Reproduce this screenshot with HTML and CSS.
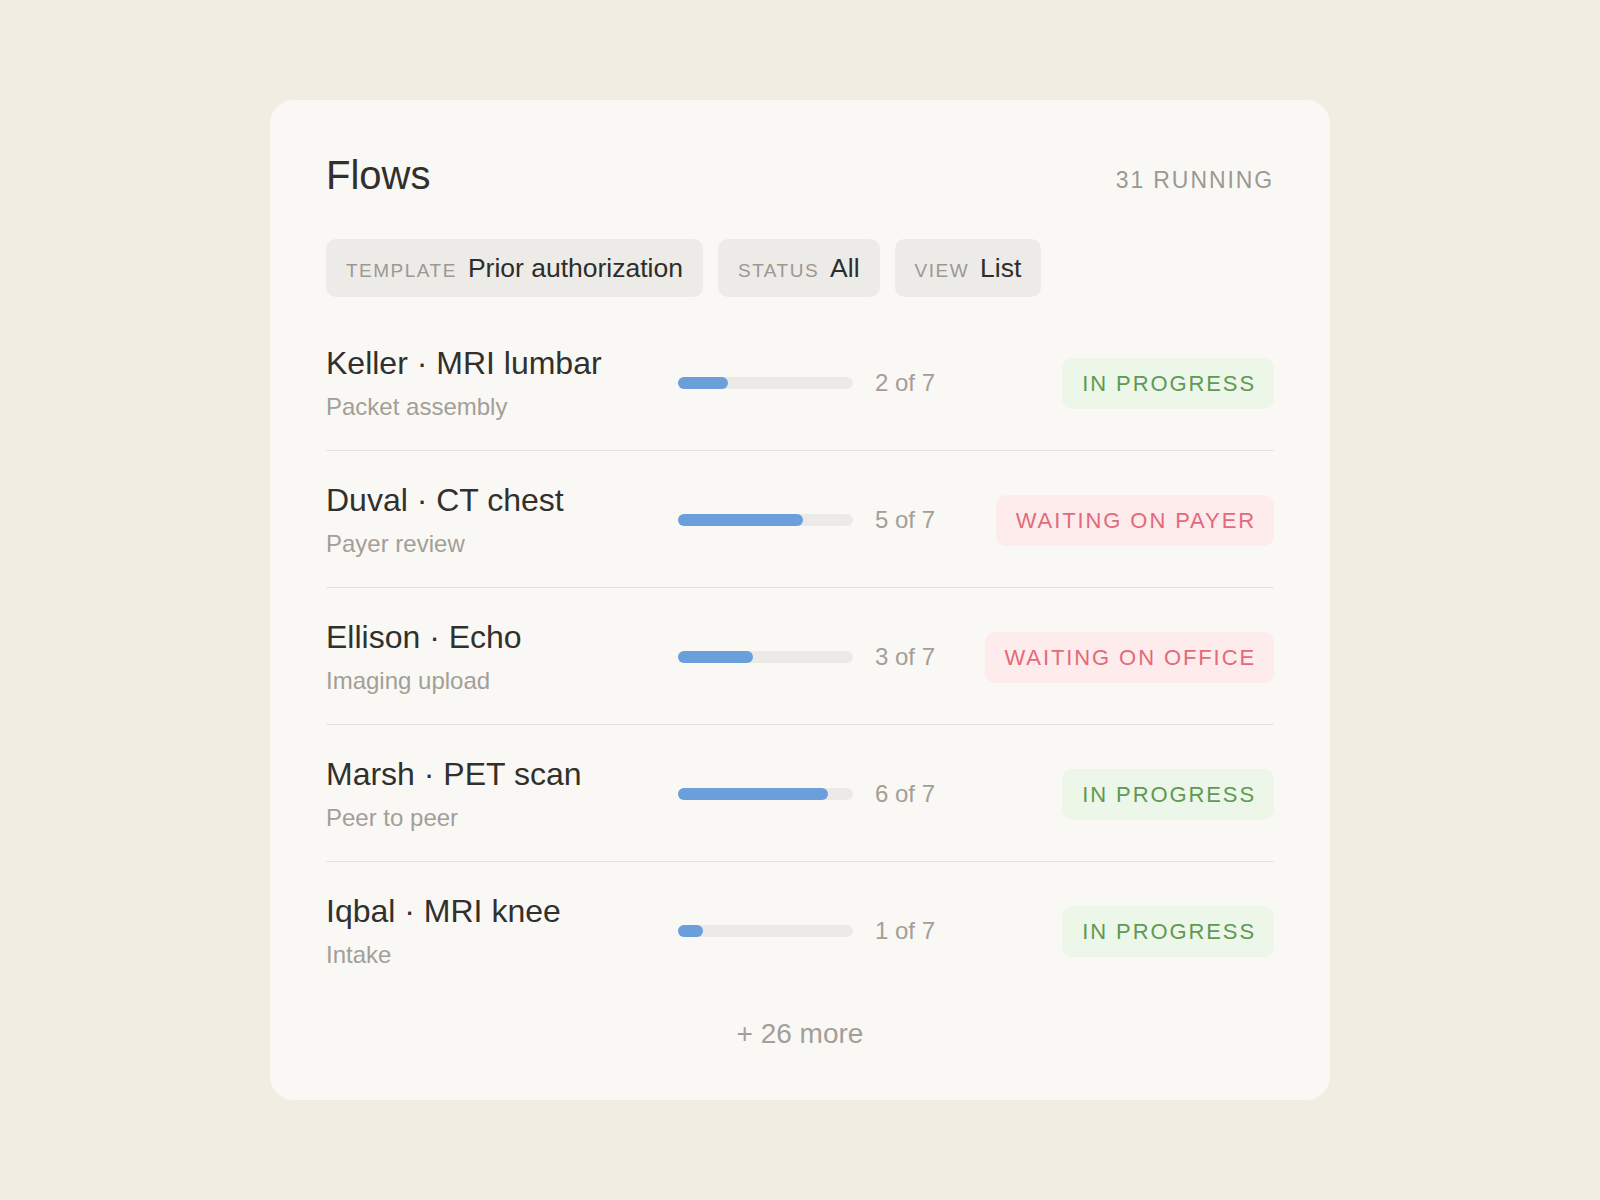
FILE: index.html
```html
<!DOCTYPE html>
<html lang="en">
<head>
<meta charset="UTF-8">
<meta name="viewport" content="width=device-width, initial-scale=1.0">
<title>Flows</title>
<link rel="stylesheet" href="styles.css">
</head>
<body>
<div class="card">
    <div class="header">
        <h1>Flows</h1>
        <span class="count">31 RUNNING</span>
    </div>
    <div class="filters">
        <div class="chip"><span class="chip-label">TEMPLATE</span><span class="chip-value">Prior authorization</span></div>
        <div class="chip"><span class="chip-label">STATUS</span><span class="chip-value">All</span></div>
        <div class="chip"><span class="chip-label">VIEW</span><span class="chip-value">List</span></div>
    </div>
    <div class="list">
        <div class="row">
            <div class="info">
                <div class="name">Keller · MRI lumbar</div>
                <div class="step">Packet assembly</div>
            </div>
            <div class="bar"><div class="fill" style="width: 28.57%"></div></div>
            <div class="progress">2 of 7</div>
            <div class="badge green">IN PROGRESS</div>
        </div>
        <div class="row">
            <div class="info">
                <div class="name">Duval · CT chest</div>
                <div class="step">Payer review</div>
            </div>
            <div class="bar"><div class="fill" style="width: 71.43%"></div></div>
            <div class="progress">5 of 7</div>
            <div class="badge red">WAITING ON PAYER</div>
        </div>
        <div class="row">
            <div class="info">
                <div class="name">Ellison · Echo</div>
                <div class="step">Imaging upload</div>
            </div>
            <div class="bar"><div class="fill" style="width: 42.86%"></div></div>
            <div class="progress">3 of 7</div>
            <div class="badge red">WAITING ON OFFICE</div>
        </div>
        <div class="row">
            <div class="info">
                <div class="name">Marsh · PET scan</div>
                <div class="step">Peer to peer</div>
            </div>
            <div class="bar"><div class="fill" style="width: 85.71%"></div></div>
            <div class="progress">6 of 7</div>
            <div class="badge green">IN PROGRESS</div>
        </div>
        <div class="row">
            <div class="info">
                <div class="name">Iqbal · MRI knee</div>
                <div class="step">Intake</div>
            </div>
            <div class="bar"><div class="fill" style="width: 14.29%"></div></div>
            <div class="progress">1 of 7</div>
            <div class="badge green">IN PROGRESS</div>
        </div>
    </div>
    <div class="more">+ 26 more</div>
</div>
</body>
</html>
```

FILE: styles.css
```css
body {
    font-family: "Liberation Sans", Arial, sans-serif;
    margin: 0;
    background-color: #f2ede2;
    color: #31302c;
}
.card {
    width: 1060px;
    box-sizing: border-box;
    margin: 100px auto 0;
    padding: 51px 56px 48px;
    background-color: #f9f8f4;
    border-radius: 24px;
}
.header {
    display: flex;
    justify-content: space-between;
    align-items: center;
}
h1 {
    margin: 0;
    font-size: 40px;
    line-height: 48px;
    font-weight: normal;
}
.count {
    margin-top: 10px;
    font-size: 23px;
    line-height: 28px;
    letter-spacing: 1.9px;
    color: #9b9893;
}
.filters {
    display: flex;
    gap: 15px;
    margin-top: 40px;
}
.chip {
    display: flex;
    align-items: baseline;
    padding: 13px 20px;
    background-color: #ecebe7;
    border-radius: 10px;
}
.chip-label {
    margin-right: 11px;
    font-size: 19px;
    letter-spacing: 1.5px;
    color: #9b9893;
}
.chip-value {
    font-size: 26.5px;
    line-height: 32px;
    color: #2e2d2a;
}
.list {
    margin-top: 17px;
}
.row {
    display: grid;
    grid-template-columns: 352px 175px 1fr auto;
    align-items: center;
    padding: 29px 0 27px;
    border-bottom: 1px solid #e5e3de;
}
.row:last-child {
    border-bottom: 0;
}
.name {
    font-size: 32px;
    line-height: 40px;
}
.step {
    margin-top: 8px;
    font-size: 24px;
    line-height: 32px;
    color: #a29f99;
}
.bar {
    height: 12px;
    border-radius: 6px;
    background-color: #ebeae6;
}
.fill {
    height: 100%;
    border-radius: 6px;
    background-color: #6b9fdc;
}
.progress {
    padding-left: 22px;
    font-size: 24px;
    color: #a29f99;
}
.badge {
    padding: 13px 18px 13px 20px;
    font-size: 22px;
    line-height: 25px;
    letter-spacing: 1.9px;
    border-radius: 10px;
}
.green {
    background-color: #ecf6e9;
    color: #5f9a53;
}
.red {
    background-color: #fdeceb;
    color: #e26a7b;
}
.more {
    margin-top: 18px;
    text-align: center;
    font-size: 28px;
    line-height: 36px;
    color: #a29f99;
}
```
